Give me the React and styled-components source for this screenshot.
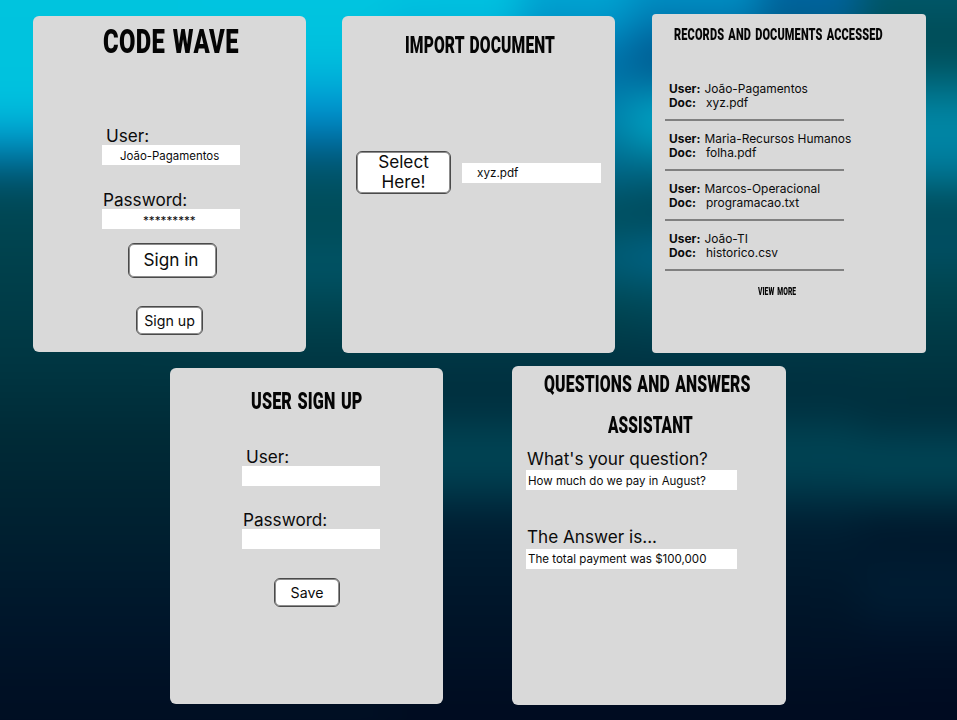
import React from "react";
import styled, { createGlobalStyle } from "styled-components";

const GlobalStyle = createGlobalStyle`
  * { box-sizing: border-box; }
  body { margin: 0; font-family: Inter, "Liberation Sans", sans-serif; color: #0b0b0b; }
`;

const Page = styled.main`
  position: relative;
  width: 957px;
  height: 720px;
  overflow: hidden;
  padding-top: 14px;
  background: #001c2e;
`;

const Backdrop = styled.div`
  position: absolute;
  inset: 0 -60px;
  display: flex;
  filter: blur(18px);
`;

const Band = styled.div`
  flex: none;
  width: ${(p) => p.$width}px;
  margin: -60px 0;
  background: linear-gradient(180deg, ${(p) => p.$stops.map(([y, c]) => `${c} ${y + 60}px`).join(", ")});
`;

const Row = styled.div`
  position: relative;
  display: flex;
  align-items: flex-start;
  padding-left: ${(p) => p.$left}px;
  gap: ${(p) => p.$gap}px;
  height: ${(p) => p.$height}px;
`;

const Card = styled.section`
  display: flex;
  flex-direction: column;
  align-items: flex-start;
  flex: none;
  width: ${(p) => p.$width || 273}px;
  height: ${(p) => p.$height}px;
  margin: ${(p) => p.$top || 0}px 0 0 ${(p) => p.$left || 0}px;
  padding-left: ${(p) => p.$inset}px;
  border-radius: ${(p) => p.$radius || 6}px;
  background: #d9d9d9;
`;

const Title = styled.h1`
  margin: ${(p) => p.$top}px 0 0 ${(p) => p.$indent || 0}px;
  font: 900 ${(p) => p.$size}px/${(p) => p.$size}px Roboto, sans-serif;
  text-transform: uppercase;
  white-space: nowrap;
  color: #050505;
  letter-spacing: ${(p) => p.$spacing || 0.2}px;
  word-spacing: 2px;
  transform: scaleX(${(p) => p.$stretch});
  transform-origin: left center;
`;

const Label = styled.label`
  margin: ${(p) => p.$top}px 0 ${(p) => p.$bottom || 0}px ${(p) => p.$indent || 0}px;
  font-size: 17.15px;
  line-height: 18px;
  white-space: nowrap;
`;

const Field = styled.div`
  flex: none;
  width: ${(p) => p.$width || 138}px;
  height: 20px;
  padding-left: ${(p) => p.$pad || 0}px;
  background: #fff;
  font-size: ${(p) => p.$size || 11.7}px;
  line-height: ${(p) => p.$line || 21}px;
  white-space: nowrap;
`;

const Button = styled.button`
  flex: none;
  width: ${(p) => p.$width}px;
  height: ${(p) => p.$height}px;
  margin: ${(p) => p.$top || 0}px 0 0 ${(p) => p.$indent || 0}px;
  padding: 0 ${(p) => p.$shift || 0}px ${(p) => p.$lift || 0}px 0;
  border: 1px solid #4a4a4a;
  box-shadow: inset 0 0 0 1px #8c8c8c;
  border-radius: 6px;
  background: #fff;
  color: #0b0b0b;
  font: 400 ${(p) => p.$size}px/20px Inter, sans-serif;
`;

const Picker = styled.div`
  display: flex;
  align-items: center;
  gap: 11px;
  margin-top: 94px;
`;

const Records = styled.ul`
  list-style: none;
  margin: 39px 0 0;
  padding: 0;
`;

const Entry = styled.li`
  width: 179px;
  height: 50px;
  padding: 0 0 0 4px;
  font-size: 11.95px;
  line-height: 14px;
  white-space: nowrap;
`;

const Line = styled.div`
  display: flex;
  gap: ${(p) => p.$gap}px;
`;

const Divider = styled.hr`
  width: 179px;
  height: 2px;
  margin: 9px 0 0 -4px;
  border: 0;
  background: #808080;
`;

const More = styled(Title).attrs({ as: "a" })``;

const records = [
  ["João-Pagamentos", "xyz.pdf"],
  ["Maria-Recursos Humanos", "folha.pdf"],
  ["Marcos-Operacional", "programacao.txt"],
  ["João-TI", "historico.csv"],
];

const darkTail = [[365, "#003642"], [440, "#002a36"], [550, "#001e2f"], [630, "#00152a"], [720, "#000e22"]];
const glowTail = [[365, "#003342"], [405, "#002e3d"], [445, "#004656"], [480, "#003f50"], [520, "#001f33"], [600, "#00162a"], [720, "#000b20"]];

const bands = [
  [250, [[0, "#00c4de"], [105, "#00c2df"], [140, "#0097cb"], [165, "#00648c"], [192, "#004a58"], [260, "#00414c"], ...darkTail]],
  [200, [[0, "#00c5e0"], [60, "#00c0de"], [90, "#00a6d6"], [118, "#008ccb"], [145, "#006496"], [170, "#005468"], [220, "#004a55"], [265, "#005568"], [310, "#004450"], ...darkTail]],
  [130, [[0, "#00c3e0"], [40, "#00b0da"], [90, "#008cc0"], [140, "#0070a0"], [200, "#004c5e"], [255, "#005a72"], [310, "#00444f"], ...glowTail]],
  [110, [[0, "#00a5d2"], [30, "#0090c6"], [60, "#006da5"], [120, "#0085ad"], [180, "#006080"], [215, "#004a55"], [255, "#00607c"], [310, "#00444f"], ...glowTail]],
  [130, [[0, "#0090c4"], [25, "#0075ae"], [50, "#005a90"], [75, "#006094"], [100, "#0092b8"], [118, "#00aac8"], [140, "#0098ba"], [165, "#006888"], [215, "#004350"], [255, "#006a90"], [290, "#004f60"], ...glowTail]],
  [100, [[0, "#0065a0"], [30, "#005a86"], [80, "#00607c"], [130, "#0080a0"], [200, "#004a58"], [300, "#004450"], ...glowTail]],
  [180, [[0, "#00586a"], [45, "#004850"], [80, "#006478"], [120, "#008cab"], [170, "#007a9b"], [205, "#004854"], [240, "#005168"], [285, "#004650"], [345, "#003844"], [375, "#003440"], [415, "#002c3b"], [460, "#00495a"], [490, "#003a4a"], [525, "#00162a"], [590, "#001e34"], [650, "#001026"], [720, "#000a20"]]],
];

export default function App() {
  return (
    <>
      <GlobalStyle />
      <Page>
        <Backdrop>
          {bands.map(([width, stops], i) => (
            <Band key={i} $width={width} $stops={stops} />
          ))}
        </Backdrop>
        <Row $left={33} $gap={36} $height={352}>
          <Card $top={2} $height={336} $inset={69}>
            <Title $top={8} $indent={1} $size={34} $stretch={0.7} $spacing={0.5}>Code Wave</Title>
            <Label $top={69} $indent={4}>User:</Label>
            <Field $pad={18} $size={11.45} $line={22}>João-Pagamentos</Field>
            <Label $top={26} $indent={1}>Password:</Label>
            <Field $pad={41} $line={25}>*********</Field>
            <Button $top={14} $indent={26} $width={89} $height={35} $size={17.2} $shift={3} $lift={2}>Sign in</Button>
            <Button $top={28} $indent={34} $width={67} $height={29} $size={14.2}>Sign up</Button>
          </Card>
          <Card $top={2} $height={337} $inset={14}>
            <Title $top={17} $indent={49} $size={24} $stretch={0.65}>Import Document</Title>
            <Picker>
              <Button $width={95} $height={43} $size={17.2} $lift={1}>Select<br />Here!</Button>
              <Field $width={139} $pad={15}>xyz.pdf</Field>
            </Picker>
          </Card>
          <Card $width={274} $height={339} $inset={13} $radius={4} $left={1}>
            <Title $top={12} $indent={9} $size={17} $stretch={0.646}>Records and documents accessed</Title>
            <Records>
              {records.map(([user, doc]) => (
                <Entry key={user}>
                  <Line $gap={4}><b>User:</b><span>{user}</span></Line>
                  <Line $gap={10}><b>Doc:</b><span>{doc}</span></Line>
                  <Divider />
                </Entry>
              ))}
            </Records>
            <More $top={4} $indent={93} $size={11} $stretch={0.61} $spacing={0.1}>View more</More>
          </Card>
        </Row>
        <Row $left={170} $gap={69} $height={340}>
          <Card $top={2} $height={336} $inset={72}>
            <Title $top={21} $indent={9} $size={24} $stretch={0.674}>User sign up</Title>
            <Label $top={35} $indent={4}>User:</Label>
            <Field />
            <Label $top={25} $indent={1}>Password:</Label>
            <Field />
            <Button $top={29} $indent={32} $width={66} $height={29} $size={14.2}>Save</Button>
          </Card>
          <Card $width={274} $height={339} $inset={14}>
            <Title $top={6} $indent={18} $size={24} $stretch={0.658}>Questions and answers</Title>
            <Title $top={17} $indent={82} $size={24} $stretch={0.641}>Assistant</Title>
            <Label $top={13} $bottom={2} $indent={1}>What's your question?</Label>
            <Field $width={211} $pad={2} $size={11.5} $line={22}>How much do we pay in August?</Field>
            <Label $top={38} $bottom={3} $indent={1}>The Answer is...</Label>
            <Field $width={211} $pad={2} $size={11.55}>The total payment was $100,000</Field>
          </Card>
        </Row>
      </Page>
    </>
  );
}
